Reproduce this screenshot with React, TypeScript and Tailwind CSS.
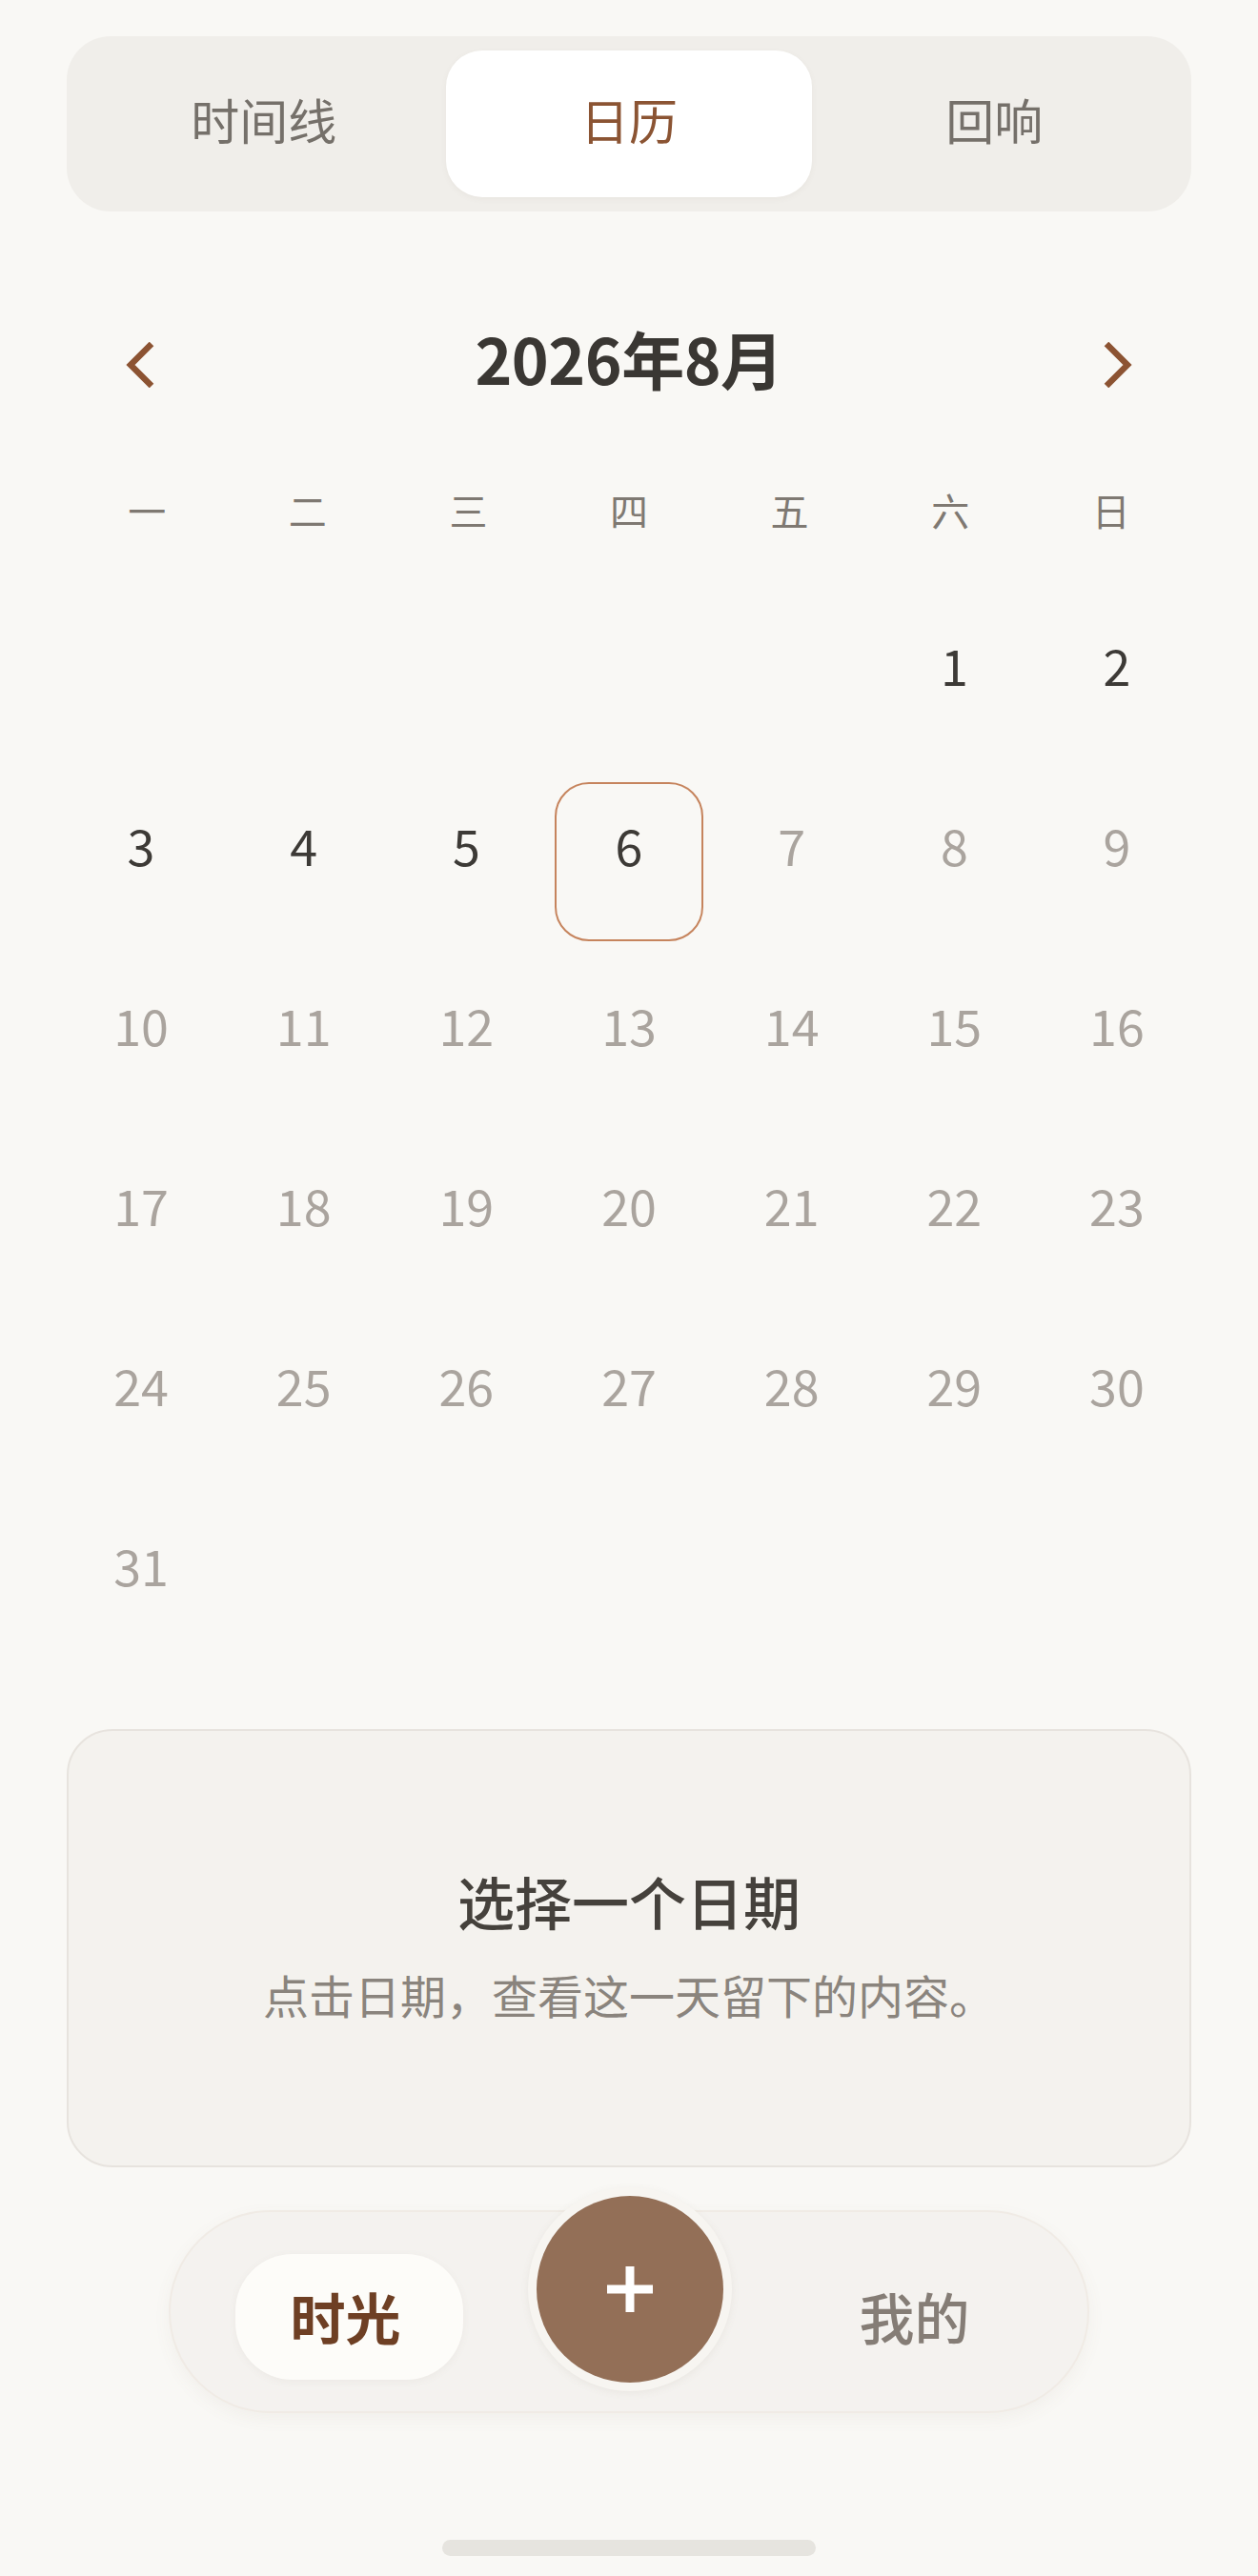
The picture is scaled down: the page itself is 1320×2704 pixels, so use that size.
import React from "react";

const FONT = { fontFamily: '"Noto Sans CJK SC", "Noto Sans", sans-serif' };

function Chevron({ dir }: { dir: "left" | "right" }) {
  return (
    <svg width="30" height="48" viewBox="0 0 30 48" fill="none" className="mt-[16px]">
      {dir === "left" ? (
        <polyline points="27,2 5,24 27,46" stroke="#8c5332" strokeWidth="6.5" strokeLinejoin="miter" strokeLinecap="butt" />
      ) : (
        <polyline points="3,2 25,24 3,46" stroke="#8c5332" strokeWidth="6.5" strokeLinejoin="miter" strokeLinecap="butt" />
      )}
    </svg>
  );
}

export default function App() {
  const weekdays = ["一", "二", "三", "四", "五", "六", "日"];
  const cells: (number | null)[] = [null, null, null, null, null];
  for (let d = 1; d <= 31; d++) cells.push(d);

  return (
    <div className="w-[1320px] min-h-[2704px] bg-[#f9f8f5] flex flex-col items-center" style={FONT}>
      {/* Segmented control */}
      <div className="mt-[38px] w-[1180px] h-[184px] rounded-[46px] bg-[#f0eeea] p-[15px] grid grid-cols-3">
        <div className="flex items-center justify-center pb-[10px] text-[51px] text-[#75706a]">时间线</div>
        <div className="flex items-center justify-center pb-[10px] rounded-[38px] bg-white text-[51px] text-[#8b5433] shadow-[0_2px_6px_rgba(120,100,80,0.06)]">日历</div>
        <div className="flex items-center justify-center pb-[10px] text-[51px] text-[#75706a]">回响</div>
      </div>

      {/* Month header */}
      <div className="mt-[103px] w-[1180px] h-[100px] flex items-center justify-between px-[62px]">
        <Chevron dir="left" />
        <div className="text-[66px] font-bold text-[#3a3733] tracking-[-0.5px]">2026年8月</div>
        <Chevron dir="right" />
      </div>

      {/* Weekdays */}
      <div className="mt-[80px] w-[1180px] h-[60px] grid grid-cols-7">
        {weekdays.map((w) => (
          <div key={w} className="flex items-center justify-center text-[40px] text-[#7f7972]">
            {w}
          </div>
        ))}
      </div>

      {/* Days grid */}
      <div className="mt-[67px] w-[1180px] grid grid-cols-7 gap-x-[14.6px] gap-y-[22px]">
        {cells.map((d, i) => (
          <div key={i} className="h-[167px] flex items-center justify-center">
            {d !== null && (
              <div
                className={
                  "w-[156px] h-[167px] flex items-center justify-center rounded-[36px] " +
                  (d === 6 ? "border-2 border-[#c6845d]" : "")
                }
              >
                <span
                  className={
                    "text-[52px] leading-none mb-[36px] " + (d <= 6 ? "text-[#3d3a36]" : "text-[#aaa49e]")
                  }
                >
                  {d}
                </span>
              </div>
            )}
          </div>
        ))}
      </div>

      {/* Empty state card */}
      <div className="mt-[71px] w-[1180px] h-[460px] rounded-[48px] border-2 border-[#e7e3de] bg-[#f4f2ee] flex flex-col items-center justify-center pb-[8px]">
        <div className="text-[60px] font-medium text-[#45413c] leading-none">选择一个日期</div>
        <div className="mt-[44px] text-[48px] text-[#8a847d] leading-none">点击日期，查看这一天留下的内容。</div>
      </div>

      {/* Bottom nav */}
      <div className="mt-[45px] w-[966px] h-[213px] rounded-full bg-[#f4f2ef] border-2 border-[#f0ebe5] shadow-[0_6px_18px_rgba(120,100,80,0.06)] flex items-center">
        <div className="ml-[68px] w-[239px] h-[132px] mt-[10px] rounded-[60px] bg-[#fdfcf9] shadow-[0_2px_8px_rgba(120,100,80,0.06)] flex items-center justify-center pr-[8px] text-[58px] font-bold text-[#6e3f24]">
          时光
        </div>
        <div className="ml-[68px] w-[214px] h-[214px] -translate-y-[24px] rounded-full bg-[#f7f5f1] shadow-[0_2px_8px_rgba(120,100,80,0.08)] flex items-center justify-center">
          <div className="w-[196px] h-[196px] rounded-full bg-[#936f57] flex items-center justify-center">
            <svg width="48" height="48" viewBox="0 0 48 48">
              <rect x="19.5" y="0" width="9" height="48" fill="#ffffff" />
              <rect x="0" y="19.5" width="48" height="9" fill="#ffffff" />
            </svg>
          </div>
        </div>
        <div className="flex-1 pl-[10px] flex items-center justify-center text-[58px] font-medium text-[#857d76] mt-[10px]">
          我的
        </div>
      </div>

      {/* Home indicator */}
      <div className="mt-[133px] w-[392px] h-[17px] rounded-full bg-[#e6e4df]" />
    </div>
  );
}
